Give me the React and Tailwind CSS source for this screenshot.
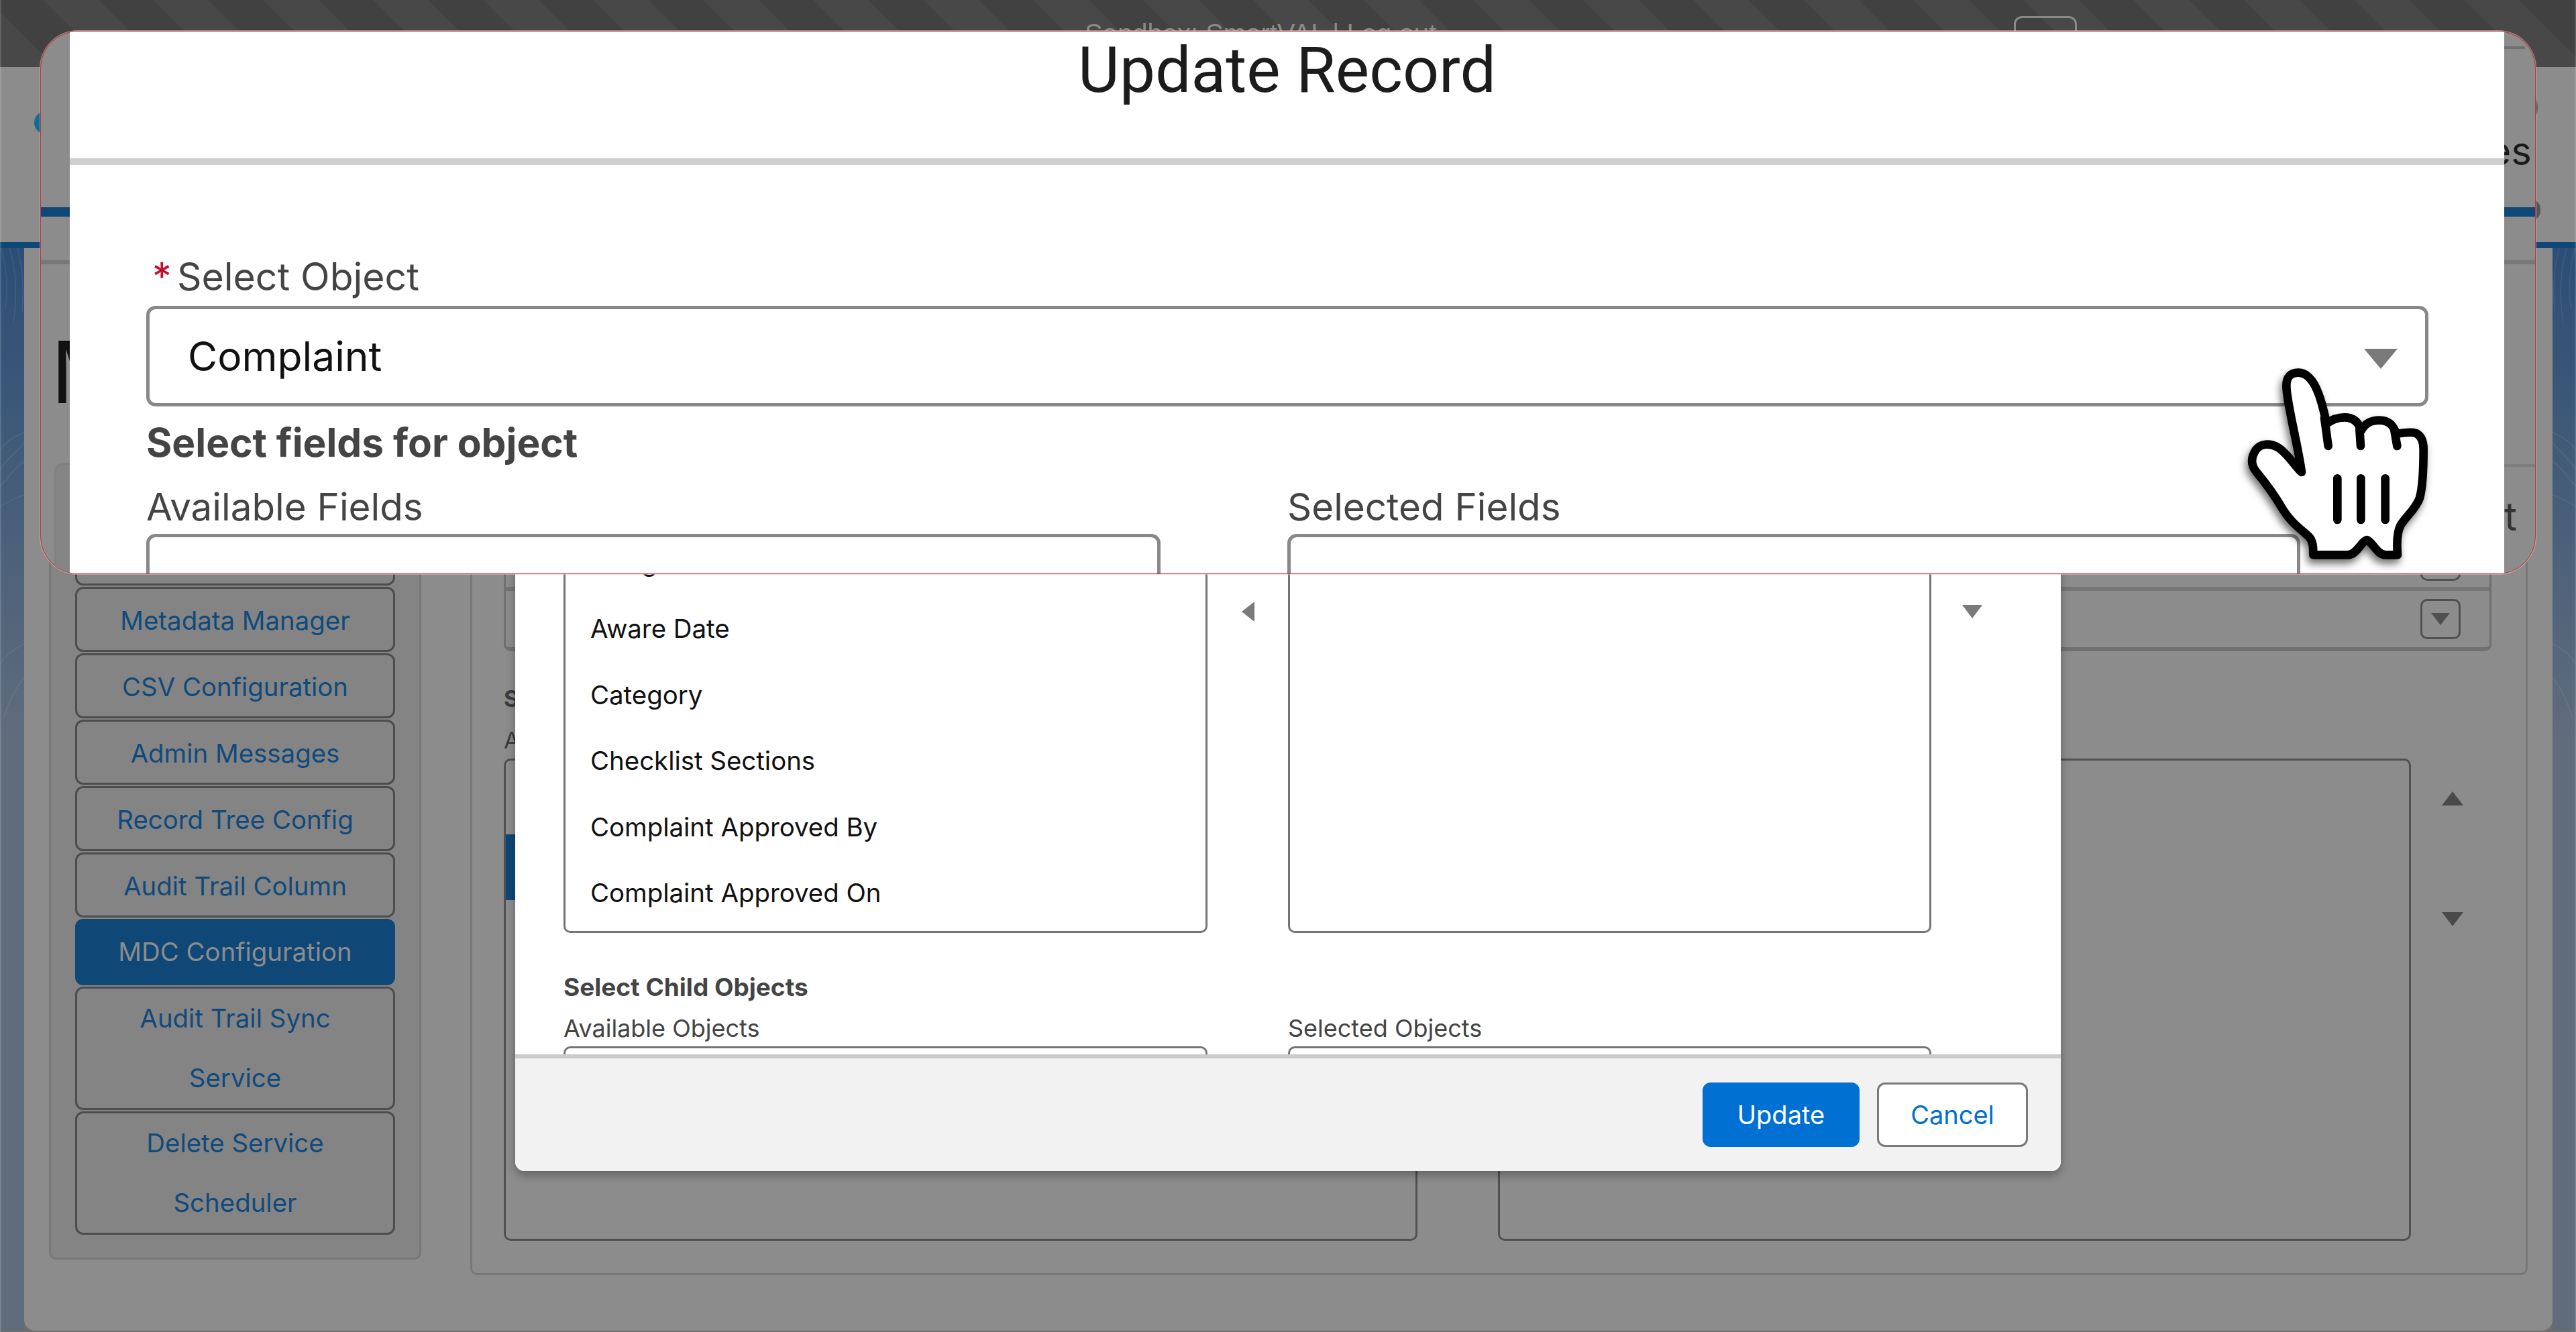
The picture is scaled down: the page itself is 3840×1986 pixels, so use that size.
const sideButtons = [
  { label: "", h: "h-[97px] pt-[4px]" },
  { label: "Metadata Manager", h: "h-[97px] pt-[4px]" },
  { label: "CSV Configuration", h: "h-[97px] pt-[4px]" },
  { label: "Admin Messages", h: "h-[97px] pt-[4px]" },
  { label: "Record Tree Config", h: "h-[97px] pt-[4px]" },
  { label: "Audit Trail Column", h: "h-[97px] pt-[4px]" },
];

const fields = ["Assigned To", "Aware Date", "Category", "Checklist Sections", "Complaint Approved By", "Complaint Approved On"];

function Tri({ dir, className }) {
  const pts = { down: "0,0 100,0 50,100", up: "50,0 100,100 0,100", left: "100,0 100,100 0,50" }[dir];
  return (
    <svg viewBox="0 0 100 100" preserveAspectRatio="none" className={className} fill="currentColor">
      <polygon points={pts} strokeLinejoin="round" />
    </svg>
  );
}

function Texture({ flip }) {
  return (
    <svg viewBox="0 0 36 800" preserveAspectRatio="none" className={`w-full h-[800px] ${flip ? "-scale-x-100" : ""}`} fill="none" stroke="#ffffff" strokeOpacity="0.08" strokeWidth="1.5">
      <path d="M2 0C10 30 12 60 8 90" />
      <path d="M14 0C24 30 26 70 20 110" />
      <path d="M26 0C34 30 36 60 33 95" />
      <path d="M0 300C12 285 24 280 36 275" />
      <path d="M0 330C12 312 24 305 36 290" />
      <path d="M0 355C14 340 24 325 36 318" />
      <path d="M0 385C12 378 24 372 36 368" />
      <path d="M0 620C10 605 26 595 36 590" />
      <path d="M6 700C14 670 28 650 36 640" />
    </svg>
  );
}

function Hand() {
  return (
    <svg viewBox="0 0 1200 1080" className="absolute left-[3239px] top-[453px] w-[400px] h-[360px] drop-shadow-[-3px_7px_6px_rgba(0,0,0,0.55)]" fill="none" stroke="#000" strokeWidth="38" strokeLinecap="round" strokeLinejoin="round">
      <path
        fill="#fff"
        d="M393 612C375 480 325 300 325 225C325 185 345 167 378 167C420 167 450 210 470 265C485 305 495 350 505 395C530 375 560 367 585 367C630 367 650 395 660 425C675 395 705 380 740 380C785 380 805 405 816 442C850 435 880 430 905 438C930 450 938 475 938 510C938 600 935 680 920 730C900 780 860 810 835 850C820 880 818 930 822 982L770 982C730 982 715 930 685 915C660 920 640 982 600 982L445 982C445 950 445 920 425 900C380 860 340 830 310 780C275 720 240 670 190 610C165 580 165 545 190 510C210 485 250 480 285 500C330 525 365 590 393 612Z"
      />
      <path d="M495 370L512 495M652 420L657 495M808 425L820 495M553 640V825M658 640V825M767 640V825" />
    </svg>
  );
}

function SideBtn({ label, h, children }) {
  return (
    <div className={`${h} shrink-0 border-[3px] border-[#4d4d4d] rounded-[12px] flex items-center justify-center text-center text-[38.4px] leading-[89px] text-[#104a7c]`}>
      {children || label}
    </div>
  );
}

function ZoomOverlay() {
  return (
    <div className="absolute left-[60px] top-[46px] w-[3720px] h-[810px] rounded-[56px] border border-[#b8323c] overflow-hidden bg-[#8c8c8c] flex shadow-[0_0_0_1px_rgba(255,190,190,0.5)]">
      <div className="w-[43px] shrink-0 flex flex-col overflow-hidden">
        <div className="mt-[262px] h-[14px] bg-[#0f4777]" />
        <div className="mt-[65px] h-[6px] bg-[#787878]" />
        <div className="mt-[114px] h-[93px] pl-[15px] text-[128px] leading-[93px] text-[#111] whitespace-nowrap font-normal">M</div>
        <div className="mt-[89px] ml-[20px] flex-1 bg-[#858585] rounded-tl-[14px] border-l-[3px] border-t-[3px] border-[#808080]" />
      </div>

      <div className="w-[3629px] shrink-0 bg-white flex flex-col">
        <div className="h-[199px] shrink-0 border-b-[10px] border-[#cfcfcf] text-center text-[#1c1c1c] font-[Roboto,sans-serif] text-[95px] leading-[116px]">
          Update Record
        </div>
        <div className="pl-[114px] flex flex-col">
          <div className="mt-[138px] h-[58px] flex items-center text-[#444] text-[57px] leading-[58px]">
            <span className="w-[46px] pl-[9px] text-[#c00d2a] text-[57px]">*</span>
            <span>Select Object</span>
          </div>
          <div className="mt-[14px] w-[3402px] h-[150px] rounded-[14px] border-[5px] border-[#888] flex items-center justify-between pl-[57px] pr-[41px] text-[60.5px] text-[#111]">
            <span>Complaint</span>
            <Tri dir="down" className="mt-[8px] w-[50px] h-[30px] text-[#7a7a7a]" />
          </div>
          <div className="mt-[21px] h-[66px] leading-[66px] text-[58.6px] font-bold text-[#444]">Select fields for object</div>
          <div className="mt-[30px] flex text-[56.5px] leading-[66px] text-[#444]">
            <span className="w-[1701px]">Available Fields</span>
            <span>Selected Fields</span>
          </div>
          <div className="mt-[7px] flex">
            <div className="w-[1512px] h-[80px] rounded-t-[14px] border-[5px] border-b-0 border-[#888]" />
            <div className="ml-[189px] w-[1510px] h-[80px] rounded-t-[14px] border-[5px] border-b-0 border-[#888]" />
          </div>
        </div>
      </div>

      <div className="flex-1 flex flex-col overflow-hidden">
        <div className="mt-[22px] mr-[15px] h-[4px] bg-[#707070]" />
        <div className="mt-[122px] h-[60px] flex justify-end pr-[5px] text-[58px] leading-[60px] text-[#1a1a1a] whitespace-nowrap">Modules</div>
        <div className="mt-[54px] h-[14px] bg-[#0f4777]" />
        <div className="mt-[65px] h-[6px] bg-[#787878]" />
        <div className="mt-[298px] h-[4px] bg-[#7e7e7e]" />
        <div className="mt-[44px] h-[60px] text-[58px] leading-[60px] text-[#333]">t</div>
      </div>

      <Hand />
    </div>
  );
}

function Modal() {
  return (
    <div className="absolute left-[768px] top-[700px] w-[2304px] h-[1046px] bg-white rounded-[14px] overflow-hidden flex flex-col shadow-[0_6px_14px_rgba(0,0,0,0.3)]">
      <div className="flex-1 min-h-0 overflow-hidden px-[72px] pt-[20px]">
        <div className="flex items-start">
          <div className="w-[960px] shrink-0 border-[3px] border-[#757575] rounded-[10px] pt-[67px] pb-[6px]">
            {fields.map((f) => (
              <div key={f} className="h-[98.6px] flex items-center pl-[37px] text-[38.4px] text-[#111]">{f}</div>
            ))}
          </div>
          <div className="w-[120px] shrink-0 flex justify-center pt-[177px]">
            <Tri dir="left" className="w-[19px] h-[30px] text-[#7a7a7a]" />
          </div>
          <div className="w-[959px] shrink-0 self-stretch border-[3px] border-[#757575] rounded-[10px]" />
          <div className="ml-[46px] pt-[182px]">
            <Tri dir="down" className="w-[30px] h-[20px] text-[#7a7a7a]" />
          </div>
        </div>
        <div className="mt-[61px] text-[37px] leading-[40px] font-bold text-[#444]">Select Child Objects</div>
        <div className="mt-[21px] flex text-[36px] leading-[40px] text-[#444]">
          <span className="w-[1080px]">Available Objects</span>
          <span>Selected Objects</span>
        </div>
        <div className="mt-[7px] flex">
          <div className="w-[960px] h-[40px] rounded-t-[10px] border-[3px] border-b-0 border-[#757575]" />
          <div className="ml-[120px] w-[959px] h-[40px] rounded-t-[10px] border-[3px] border-b-0 border-[#757575]" />
        </div>
      </div>
      <div className="h-[174px] shrink-0 border-t-[6px] border-[#cbcbcb] bg-[#f2f2f2] flex justify-end items-start gap-[26px] pt-[36px] pr-[49px]">
        <div className="w-[234px] h-[96px] rounded-[12px] bg-[#0070d2] text-white text-[38px] flex items-center justify-center">Update</div>
        <div className="w-[225px] h-[96px] rounded-[12px] bg-white border-[3px] border-[#7a7a7a] text-[#0070d2] text-[38px] flex items-center justify-center">Cancel</div>
      </div>
    </div>
  );
}

export default function App() {
  return (
    <div className="relative w-[3840px] h-[1986px] overflow-hidden bg-[#6e6e6e] flex flex-col font-[Inter,sans-serif]">
      <div className="h-[100px] shrink-0 bg-[repeating-linear-gradient(45deg,#484848_0,#484848_58px,#414141_58px,#414141_116px)] flex items-start">
        <div className="ml-[1617px] mt-[28px] w-[1385px] font-['Liberation_Sans',sans-serif] text-[40px] leading-[44px] text-[#8a8a8a]">Sandbox: SmartVAL | Log out</div>
        <div className="mt-[24px] w-[94px] h-[60px] rounded-[12px] border-[3px] border-[#8a8a8a]" />
      </div>

      <div className="h-[261px] shrink-0 bg-[#8c8c8c] flex flex-col">
        <div className="h-[100px] flex justify-between pl-[50px] pr-[57px] pt-[30px]">
          <svg width="40" height="72" viewBox="0 0 40 72" fill="#0f6e90">
            <circle cx="19" cy="27" r="9" />
            <circle cx="18" cy="53" r="17" />
          </svg>
          <div className="w-[60px] h-[60px] rounded-full bg-[#555]" />
        </div>
        <div className="flex-1 flex justify-end items-start pr-[53px] pt-[96px]">
          <div className="w-[32px] h-[34px] rounded-full bg-[#555]" />
        </div>
      </div>
      <div className="h-[9px] shrink-0 bg-[#0f4777]" />

      <div className="flex-1 flex min-h-0 mb-[2px]">
        <div className="w-[36px] shrink-0 bg-linear-to-b from-[#2b4e76] to-[#5f6c7c] to-45%">
          <Texture />
        </div>
        <div className="flex-1 bg-[#8c8c8c] rounded-b-[16px] pl-[37px] pr-[37px] pt-[320px] flex items-start gap-[73px]">
          <div className="w-[555px] h-[1188px] shrink-0 border-[3px] border-[#777] rounded-[10px] bg-[#848484] px-[36px] pt-[83px] flex flex-col gap-[2px]">
            {sideButtons.map((b, i) => (
              <SideBtn key={i} label={b.label} h={b.h} />
            ))}
            <div className="h-[99px] shrink-0 rounded-[12px] bg-[#0f4777] flex items-center justify-center text-[38.4px] text-[#8c8c8c]">MDC Configuration</div>
            <SideBtn h="h-[184px]">Audit Trail Sync<br />Service</SideBtn>
            <SideBtn h="h-[184px]">Delete Service<br />Scheduler</SideBtn>
          </div>

          <div className="flex-1 h-[1211px] border-[3px] border-[#777] rounded-[10px] pl-[47px] pr-[51px] pt-[103px]">
            <div className="border-x-[3px] border-b-[6px] border-[#707070] rounded-b-[10px]">
              <div className="h-[85px] border-b-[6px] border-[#757575] flex items-center justify-end pr-[43px]">
                <div className="w-[60px] h-[60px] border-[3px] border-[#505050] rounded-[10px]" />
              </div>
              <div className="h-[84px] flex items-center justify-end pr-[43px]">
                <div className="w-[60px] h-[60px] border-[3px] border-[#505050] rounded-[10px] flex items-center justify-center">
                  <Tri dir="down" className="w-[28px] h-[18px] text-[#505050]" />
                </div>
              </div>
            </div>
            <div className="mt-[51px] text-[34px] leading-[40px] font-bold text-[#3c3c3c]">Select Fields</div>
            <div className="mt-[22px] text-[34px] leading-[40px] text-[#3c3c3c]">Available Fields</div>
            <div className="mt-[7px] flex items-start">
              <div className="w-[1362px] h-[719px] shrink-0 border-[3px] border-[#505050] rounded-[10px] pt-[110px]">
                <div className="h-[98px] bg-[#0f4777]" />
              </div>
              <div className="ml-[120px] w-[1361px] h-[719px] shrink-0 border-[3px] border-[#505050] rounded-[10px]" />
              <div className="ml-[46px] pt-[49px] flex flex-col gap-[159px]">
                <Tri dir="up" className="w-[32px] h-[21px] text-[#4a4a4a]" />
                <Tri dir="down" className="w-[32px] h-[21px] text-[#4a4a4a]" />
              </div>
            </div>
          </div>
        </div>
        <div className="w-[35px] shrink-0 bg-linear-to-b from-[#2b4e76] to-[#5f6c7c] to-45%">
          <Texture flip />
        </div>
      </div>

      <Modal />
      <ZoomOverlay />
      <div className="absolute left-0 top-0 w-[2px] h-full bg-white/15" />
      <div className="absolute right-0 top-0 w-[2px] h-full bg-white/15" />
    </div>
  );
}
